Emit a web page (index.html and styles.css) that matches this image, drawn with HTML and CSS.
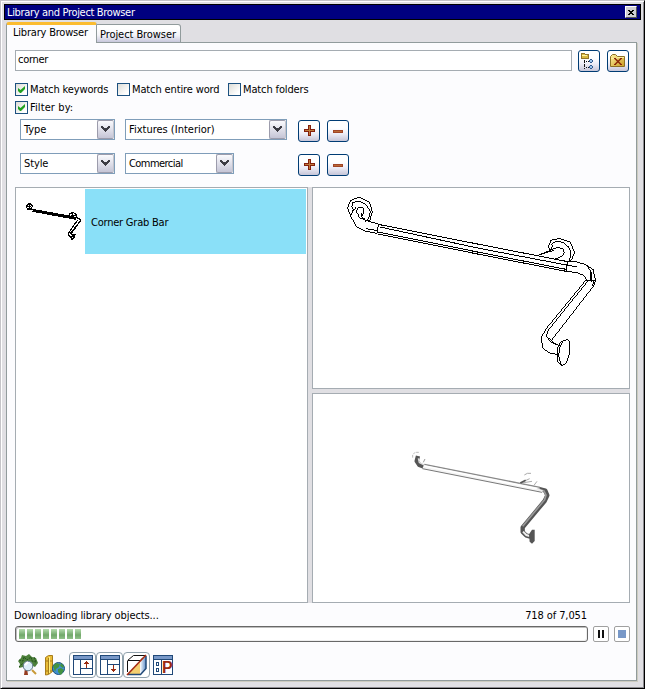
FILE: index.html
```html
<!DOCTYPE html>
<html lang="en">
<head>
<meta charset="utf-8">
<title>Library and Project Browser</title>
<link rel="stylesheet" href="styles.css">
</head>
<body>
<svg class="defs" width="0" height="0">
  <defs>
    <linearGradient id="gold" x1="0" y1="0" x2="1" y2="1"><stop offset="0" stop-color="#fff2a0"/><stop offset="1" stop-color="#c99a20"/></linearGradient>
    <linearGradient id="blue" x1="0" y1="0" x2="1" y2="0"><stop offset="0" stop-color="#fff"/><stop offset="1" stop-color="#5c8cc8"/></linearGradient>
    <linearGradient id="tube" gradientUnits="userSpaceOnUse" x1="250" y1="94" x2="246" y2="120"><stop offset="0" stop-color="#555"/><stop offset=".35" stop-color="#aaa"/><stop offset=".6" stop-color="#fff"/><stop offset=".82" stop-color="#fff"/><stop offset=".9" stop-color="#777"/></linearGradient>
    <symbol id="arrow" viewBox="0 0 9 7"><path d="M0 0h2v1h1v1h3V1h1V0h2v2H8v1H7v1H6v1H5v1H4V5H3V4H2V3H1V2H0z" fill="#3c3c44"/></symbol>
    <symbol id="tick" viewBox="0 0 9 9"><path d="M1 3v3l2 2h1l4-4V1L3.500 5z" fill="#21a121"/></symbol>
    <symbol id="plus" viewBox="0 0 22 22"><path d="M10.500 5.500h2v4h4v2h-4v4h-2v-4h-4v-2h4z" fill="#c07a3c" stroke="#84200c"/></symbol>
    <symbol id="minus" viewBox="0 0 22 22"><path d="M6.500 10.500h9v2h-9z" fill="#b96a35" stroke="#a04426"/></symbol>
  </defs>
</svg>
<div class="window">
  <header class="titlebar"><span class="title">Library and Project Browser</span>
    <button class="close" aria-label="Close"><svg width="6" height="5" shape-rendering="crispEdges"><path d="M0 0h2v1h2V0h2v1H5v1H4v1h1v1h1v1H4V4H2v1H0V4h1V3h1V2H1V1H0z" fill="#000"/></svg></button>
  </header>
  <nav class="tabs"><div class="tab active"><span class="t-lib">Library Browser</span></div><div class="tab"><span class="t-proj">Project Browser</span></div></nav>
  <main class="panel">
    <div class="search">
      <div class="field">corner</div>
      <button class="btn" aria-label="Tree"><svg width="22" height="22" shape-rendering="crispEdges"><path d="M3.500 8.500v-5h3l1 1h3v4z" fill="#d8b840" stroke="#92742a"/><path d="M4 5h5" stroke="#fff2a0"/><path d="M6.500 10v9" stroke="#111" stroke-dasharray="3 1"/><path d="M8 11.500h3M8 17.500h3" stroke="#111" stroke-dasharray="1 1"/><g fill="#30588c"><path d="M12 9h2v1h1v2h-1v1h-2v-1h-1v-2h1zM12 15h2v1h1v2h-1v1h-2v-1h-1v-2h1z"/><path d="M12 10h2v2h-2zM12 16h2v2h-2z" fill="#9cc4ec"/></g></svg></button>
      <button class="btn last" aria-label="Remove folder"><svg width="22" height="22"><path d="M3.500 16.500v-10l2-2h3l2 2h7v10z" fill="url(#gold)" stroke="#8c7024"/><path d="M4 8.500h5l2-1h6" stroke="#fff0a0" fill="none"/><path d="M8 8.500l6 6M14 8.500l-6 6" stroke="#8c2808" stroke-width="1.500" fill="none"/><path d="M7 8.500h2M13 8.500h2M7 14.500h2M13 14.500h2" stroke="#8c2808"/></svg></button>
    </div>
    <div class="checks">
      <span class="box"><svg width="9" height="9"><use href="#tick"/></svg></span><span class="lab l1">Match keywords</span>
      <span class="box"></span><span class="lab l2">Match entire word</span>
      <span class="box"></span><span class="lab l3">Match folders</span>
    </div>
    <div class="checks second"><span class="box"><svg width="9" height="9"><use href="#tick"/></svg></span><span class="lab l4">Filter by:</span></div>
    <div class="filter">
      <div class="select w95"><span>Type</span><i><svg width="9" height="7" shape-rendering="crispEdges"><use href="#arrow"/></svg></i></div>
      <div class="slot"><div class="select w162"><span class="fixt">Fixtures (Interior)</span><i><svg width="9" height="7" shape-rendering="crispEdges"><use href="#arrow"/></svg></i></div></div>
      <button class="btn" aria-label="Add"><svg width="22" height="22" shape-rendering="crispEdges"><use href="#plus"/></svg></button>
      <button class="btn last" aria-label="Remove"><svg width="22" height="22" shape-rendering="crispEdges"><use href="#minus"/></svg></button>
    </div>
    <div class="filter">
      <div class="select w95"><span>Style</span><i><svg width="9" height="7" shape-rendering="crispEdges"><use href="#arrow"/></svg></i></div>
      <div class="slot"><div class="select w109"><span class="comm">Commercial</span><i><svg width="9" height="7" shape-rendering="crispEdges"><use href="#arrow"/></svg></i></div></div>
      <button class="btn" aria-label="Add"><svg width="22" height="22" shape-rendering="crispEdges"><use href="#plus"/></svg></button>
      <button class="btn last" aria-label="Remove"><svg width="22" height="22" shape-rendering="crispEdges"><use href="#minus"/></svg></button>
    </div>
    <section class="content">
      <div class="list">
        <div class="item">
          <svg width="69" height="65" viewBox="16 189 69 65" shape-rendering="crispEdges"><g transform="translate(0 185) scale(.33333)" fill="none" stroke="#000" stroke-width="3.500"><path d="M84 57h9l4 6-3 9H83l-4-7zM88 55v18M80 64h14M84 69l14 6"/><path d="M98 76L228 100" stroke-width="9"/><path d="M208 95l2-9 8-4 9 4 3 9M212 91h17M218 84v15M228 98l10 2 4 7-32 40M232 106l-26 38v8l7 4M238 112l-24 33M213 144l5 6h7l-1 7-8 7-4-8 12-3M221 152l-3 11"/></g></svg>
          <div class="name"><span class="grab">Corner Grab Bar</span></div>
        </div>
      </div>
      <div class="previews">
        <div class="view"><svg width="316" height="200" viewBox="313 188 316 200" shape-rendering="crispEdges"><g fill="none" stroke="#000">
          <g transform="translate(330 185) scale(.33333)" stroke-width="3">
            <path d="M62 94L53 68l9-22 26-9 30 14 9 29-8 29-13-4M62 94l8-21-5-8 4-13 20-4 19 11 13 20-6 24-10 6M62 88l16-21M78 80l6-12h15l3 15-7 13M78 80l9 9v8l17 8 43 13M62 94l18 31 27 14 35 6M95 84v12l10 7M108 131l34 6M149 118l-7 12v15"/>
          </g>
          <path d="M379 224.500L480 244.500L567 261.500M380 227L480 248.500L577 267M378 232L480 252.500L567 269.500M378 234L480 254.500L567 271.500"/>
          <g transform="translate(480 220) scale(.33333)" stroke-width="3"><path d="M211 91l-6-12 8-18 25-6 32 11 14 31-9 22-11 5M211 91l6-12-2-8 14-7 20 3 17 14 7 18-5 23M170 108l62-26 16 4 5 12-7 11-24 9M173 106l48-15M258 124h27l32 10 22 14 8 34-7 19M263 125l-4 29 33 4 20 9 10 16M320 136l13 18-3 28M333 154l3 33M314 181l29-1-6 19M319 179L197 328l-13 25 4 31 18 14 27 6M323 184L206 329l-8 19 14 17 20 11M339 200L213 363M206 352l17 17 17 9M245 364l18-6 6 8-2 40-9 24-14 7-10-10-3-38 8-18zM247 366l-8 18-3 24 8 27"/></g></g></svg></div>
        <div class="view"><svg width="316" height="208" viewBox="313 394 316 208"><g transform="translate(400 440) scale(.33333)" fill="none">
          <path d="M38 53v-8l7-8h12" stroke="#bbb" stroke-width="3" stroke-dasharray="8 3"/><path d="M54 48l-4 15 8 12 14 5" stroke="#555" stroke-width="13" stroke-linejoin="round"/><path d="M55 55l3 13 14 7" stroke="#ddd" stroke-width="4"/><path d="M70 67l5-10" stroke="#999" stroke-width="3"/>
          <path d="M73 71L426 142v15L67 86z" fill="#f4f4f4"/><path d="M67 86L426 157" stroke="#777" stroke-width="3"/><path d="M73 73L420 142" stroke="#888" stroke-width="4"/><path d="M73 78L425 149" stroke="#fff" stroke-width="5"/>
          <path d="M359 130l30-14M366 129l30-5M373 105l9-5h11M402 136l9-12" stroke="#aaa" stroke-width="3"/><path d="M361 129l16-8" stroke="#555" stroke-width="5"/>
          <path d="M418 147l18 5 6 14-8 17-66 79v14l10 10 13 4" stroke="#555" stroke-width="13" stroke-linejoin="round"/><path d="M412 146l20 7 6 12-4 14-66 80" stroke="#999" stroke-width="5"/><path d="M410 147l18 7M369 275l10 10 10 3" stroke="#eee" stroke-width="6"/><path d="M396 269h8v34l-8 8-7-6-2-22z" fill="#555"/>
        </g></svg></div>
      </div>
    </section>
    <div class="status"><span class="down">Downloading library objects...</span><span class="count">718 of 7,051</span></div>
    <div class="progress"><div class="bar"><b></b><b></b><b></b><b></b><b></b><b></b><b></b><b></b></div>
      <button class="mini" aria-label="Pause"><svg width="14" height="14" shape-rendering="crispEdges"><path d="M4 3h2v8H4zM8 3h2v8H8z" fill="#111"/></svg></button>
      <button class="mini stop" aria-label="Stop"><svg width="14" height="14" shape-rendering="crispEdges"><path d="M3 3h8v8H3z" fill="#7898c8"/></svg></button></div>
    <div class="tools">
      <svg class="tree" width="22" height="24" viewBox="17 653 22 24"><path d="M24 675h4l-1-7h-2z" fill="#963c20"/><path d="M18 661l3-3 1-3 4 1 3-2 3 3 4 1 2 5-3 4-2-1-4 3-6-2-4 1 1-4z" fill="#4c803a"/><path d="M19 660l4 1 1-4 3 3 4-3 1 4 4 1M19 667l4-4M34 657l2 5" stroke="#24501e" stroke-dasharray="2 1" fill="none"/><path d="M32 670l4 4" stroke="#c89a38" stroke-width="2"/><circle cx="28" cy="666" r="4.800" fill="#dceef8" stroke="#607888"/><path d="M25 665l3-3" stroke="#fff" stroke-width="2"/></svg>
      <svg class="books" width="22" height="24" viewBox="44 653 22 24"><path d="M45.500 657.500l3-2h4v16l-4 3-3 .5z" fill="#e8bc38" stroke="#a77c1c"/><path d="M48.500 658v16M46 661h6M46 671h6" stroke="#a77c1c"/><path d="M49.500 657v16" stroke="#fff080"/><circle cx="58.500" cy="668.500" r="6" fill="#3f8ed0" stroke="#174f80"/><path d="M53 666l3-3 4 1-1 3-3 2-1 3zM58 669l3-1 3 2-3 5-3-3zM61 663l3 3-1 2-3-2z" fill="#439342"/></svg>
      <span class="tool"><svg width="20" height="20" shape-rendering="crispEdges"><path d="M.5.5h19v19H.5z" fill="#fff" stroke="#204878"/><path d="M1 1h18v3H1z" fill="#7898c8"/><path d="M1 4.500h18M7.500 5v14M8 13.500h11" stroke="#204878"/><path d="M13 6h1v1h1v1h1v1h-2v4h-1V9h-2V8h1V7h1z" fill="#9a2a10"/></svg></span>
      <span class="tool"><svg width="20" height="20" shape-rendering="crispEdges"><path d="M.5.5h19v19H.5z" fill="#fff" stroke="#204878"/><path d="M1 1h18v3H1z" fill="#7898c8"/><path d="M1 4.500h18M7.500 5v14M8 9.500h11" stroke="#204878"/><path d="M13 10h1v4h2v1h-1v1h-1v1h-1v-1h-1v-1h-1v-1h2z" fill="#9a2a10"/></svg></span>
      <span class="tool"><svg width="22" height="22"><path d="M1.500 7v11M2 6.500h12M1.500 6.500l6-5H20M14.500 6L20 1.500" fill="none" stroke="#111"/><path d="M2 20L14 8v12z" fill="#f4cf70"/><path d="M14 8l6-6v12l-6 6z" fill="url(#blue)"/><path d="M2 20.500h12.500l5.500-6V2" fill="none" stroke="#204878" stroke-width="1.500"/><path d="M1 21L20 1" stroke="#a62c12" stroke-width="1.600"/></svg></span>
      <svg class="props" width="20" height="20" shape-rendering="crispEdges"><path d="M.5.5h19v19H.5z" fill="#fff" stroke="#204878"/><path d="M1 1h18v3H1z" fill="#7898c8"/><path d="M1 4.500h18M8.500 5v14" stroke="#204878"/><g fill="none" stroke="#204878"><path d="M3.500 7.500h2v3h-2zM3.500 13.500h2v3h-2z"/></g><text x="9" y="18" class="p">P</text></svg>
    </div>
  </main>
</div>
</body>
</html>
```
FILE: styles.css
```css
* { box-sizing: border-box; }
body { margin: 0; font: 11px/14px "DejaVu Sans Condensed", "DejaVu Sans", sans-serif; letter-spacing: -0.1px; color: #000; }
.defs { position: absolute; }
button { padding: 0; margin: 0; }
svg { display: block; flex: none; }
span { white-space: nowrap; }
.window { width: 645px; height: 689px; background: #e0dfe3; border: 1px solid #c5c4c8; border-right-color: #000; border-bottom-color: #000; box-shadow: inset 1px 1px #fff, inset -1px -1px #8c8b90; padding: 3px 3px 0; }
.titlebar { height: 16px; background: #000080; border: 1px solid #000; color: #fff; display: flex; align-items: center; justify-content: space-between; padding: 0 3px 0 2px; }
.title { letter-spacing: -0.33px; padding-top: 1px; }
.close { width: 12px; height: 12px; border: 1px solid; border-color: #fff #555 #555 #fff; background: #d0cfd3; display: flex; align-items: center; justify-content: center; }
.tabs { height: 22px; padding: 2px 0 0 2px; display: flex; align-items: flex-start; }
.tab { height: 19px; width: 84px; margin-top: 2px; border: 1px solid #919b9c; border-left: 0; border-radius: 0 3px 0 0; background: linear-gradient(#fff 20%, #f3f3f8 60%, #c8c8dc); padding: 3px 0 0 3px; }
.tab.active { height: 21px; width: 91px; margin: 0; border: 1px solid #919b9c; border-bottom: 0; border-top: 3px solid #fbbc30; border-radius: 3px 3px 0 0; padding: 1px 0 0 6px; background: #fcfcfe; position: relative; }
.t-lib { letter-spacing: -0.2px; }
.t-proj { letter-spacing: -0.07px; }
.panel { margin-left: 2px; width: 631px; height: 639px; border: 1px solid #919b9c; background: #fcfcfe; padding: 7px 6px 0 8px; box-shadow: 1px 1px #cccbbf; }
.search { display: flex; height: 33px; align-items: flex-start; }
.field { width: 557px; height: 21px; border: 1px solid #a5acb2; background: #fff; padding: 2px 2px; margin-right: 6px; letter-spacing: -0.3px; }
.btn { width: 22px; height: 22px; border: 1px solid #003c74; border-radius: 3px; background: linear-gradient(#fff 35%, #ececf6 65%, #c6c5d7); display: flex; align-items: center; justify-content: center; overflow: hidden; flex: none; }
.btn svg { margin: -1px; }
.btn.last { margin-left: 7px; }
.checks { display: flex; height: 18px; }
.box { width: 13px; height: 13px; border: 1px solid #1c5180; background: linear-gradient(135deg, #dcdcd7, #fff 80%); padding: 1px; flex: none; margin-right: 2px; }
.lab { height: 14px; flex: none; letter-spacing: -0.13px; }
.l1 { width: 87px; }
.l2 { width: 96px; }
.l4 { letter-spacing: 0.1px; }
.filter { display: flex; height: 34px; padding-left: 5px; }
.select { height: 21px; border: 1px solid #7f9db9; background: #fff; display: flex; align-items: center; justify-content: space-between; padding-left: 3px; }
.select span { padding-top: 1px; }
.select .fixt { letter-spacing: 0; padding-left: 0; }
.select .comm { letter-spacing: -0.55px; }
.select i { width: 17px; height: 19px; border: 1px solid #9c9cac; border-right-color: #c4c4cc; border-radius: 2px; background: linear-gradient(#fafafd, #e0e0ea 50%, #c5c5d6); display: flex; align-items: center; justify-content: center; }
.w95 { width: 95px; }
.w162 { width: 162px; }
.w109 { width: 109px; }
.slot { width: 173px; margin-left: 10px; flex: none; }
.filter .btn { margin-top: 1px; }
.content { display: flex; height: 416px; width: 615px; background: #e0dfe3; gap: 4px; }
.list { width: 293px; border: 1px solid #a5acb2; background: #fff; padding: 1px 1px 0 0; }
.item { display: flex; height: 65px; }
.name { flex: 1; background: #8ae0f8; padding: 27px 0 0 6px; }
.grab { letter-spacing: -0.22px; }
.previews { width: 318px; display: grid; grid-template-rows: 202px 210px; gap: 4px; }
.view { background: #fff; border: 1px solid #a5acb2; }
.status { height: 23px; display: flex; justify-content: space-between; padding: 6px 43px 0 0; margin-left: -1px; width: 616px; }
.progress { display: flex; height: 16px; }
.bar { width: 573px; height: 16px; border: 1px solid #686868; border-radius: 3px; background: #fff; box-shadow: inset 1px 1px #bebebe, inset -1px -1px #eee; display: flex; gap: 2px; padding: 2px 3px; }
.bar b { width: 6px; height: 10px; background: linear-gradient(#b5dcae, #72a86a 60%, #92c28a); }
.mini { width: 16px; height: 16px; border: 1px solid #a0a0a0; border-radius: 2px; background: #fff; margin-left: 5px; }
.tools { display: flex; height: 26px; margin-top: 10px; align-items: flex-start; }
.tree { margin: 1px 0 0 2px; }
.books { margin: 1px 3px 0 5px; }
.tool { width: 27px; height: 26px; border: 1px solid #8fa0ab; border-radius: 4px; background: #fff; display: flex; align-items: center; justify-content: center; }
.props { margin: 3px 0 0 3px; }
.p { font: bold 16px "Liberation Sans", sans-serif; fill: #9a2a10; }
```
